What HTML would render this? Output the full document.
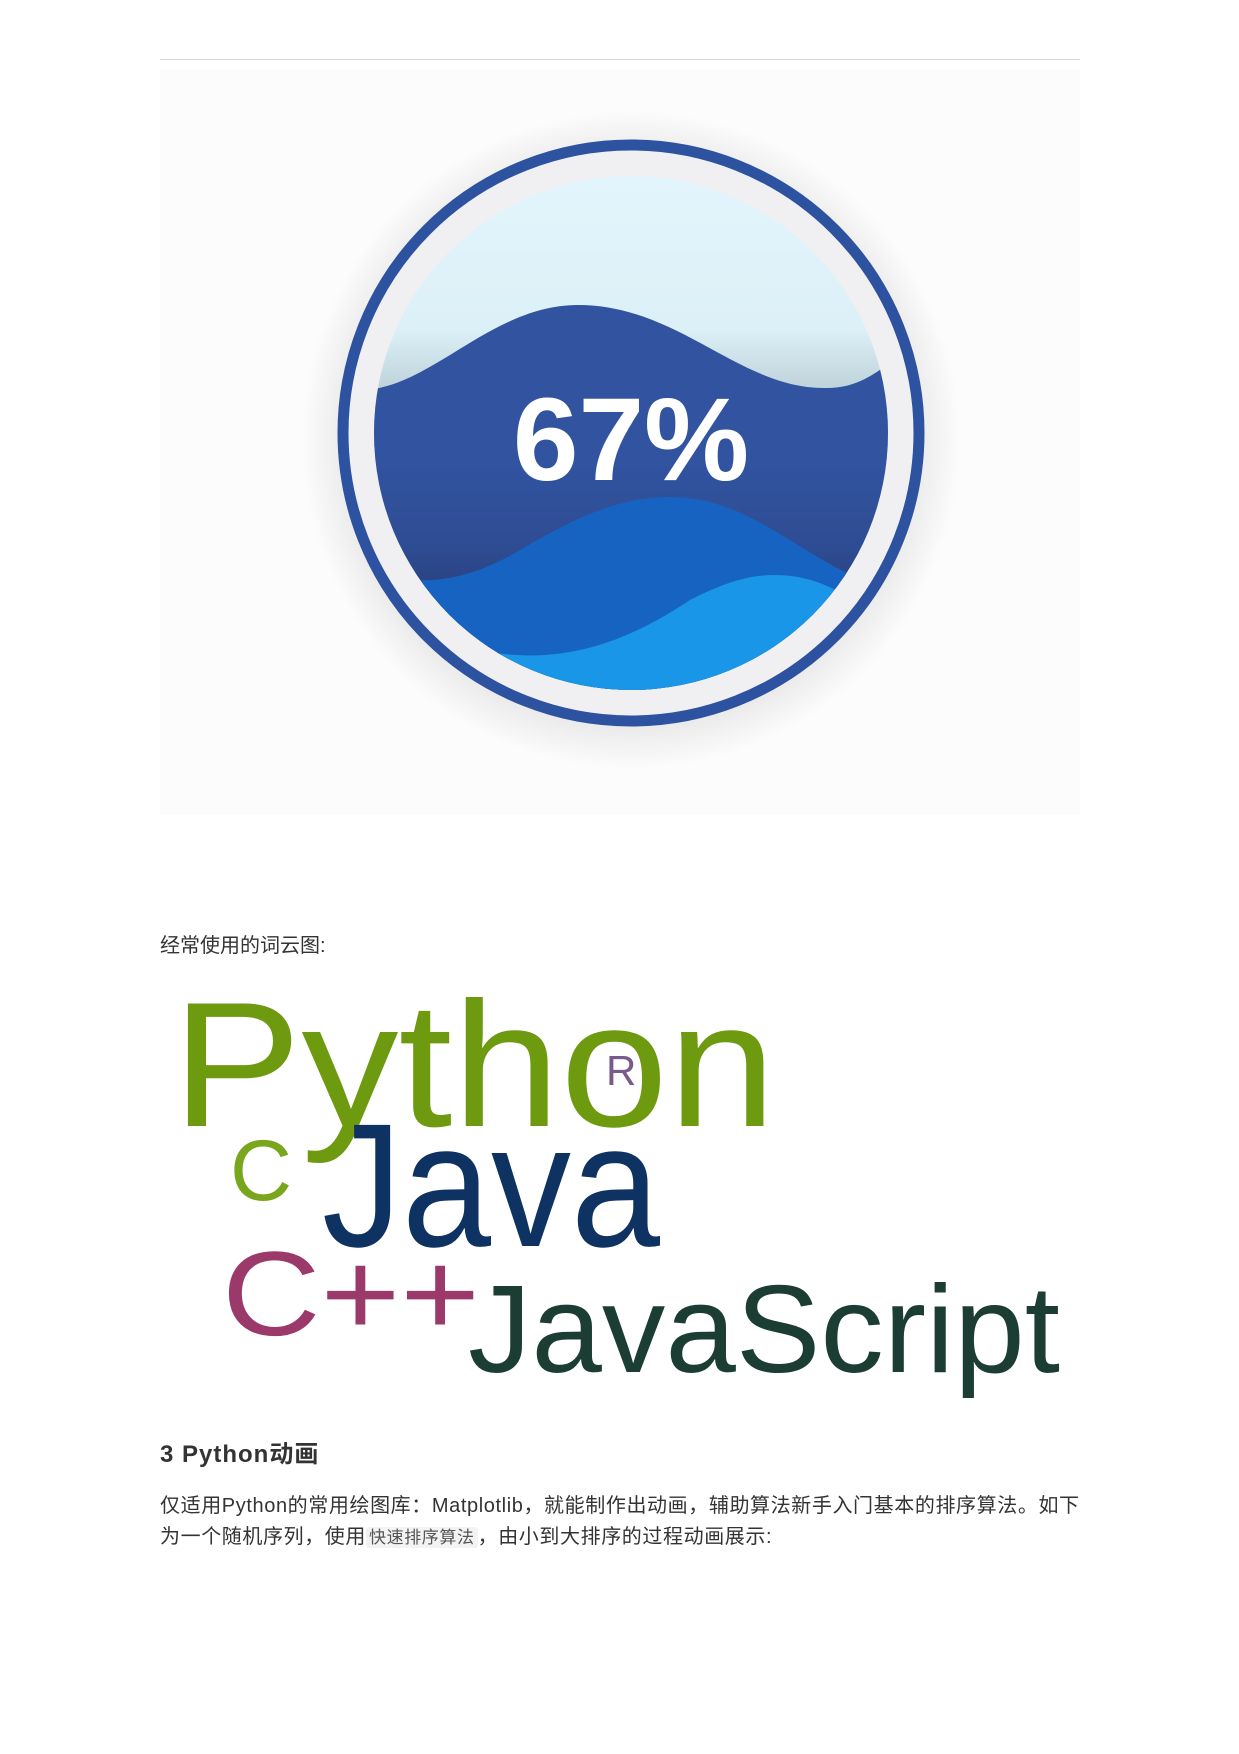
<!DOCTYPE html>
<html><head><meta charset="utf-8"><style>
body{margin:0;background:#fff;width:1239px;height:1754px;position:relative;overflow:hidden;font-family:"Liberation Sans","Noto Sans CJK SC",sans-serif;color:#333}
.hr{position:absolute;left:160px;top:59px;width:920px;height:1px;background:#d8d8d8}
.imgbg{position:absolute;left:160px;top:70px;width:920px;height:745px;background:#fcfcfc}
.t{position:absolute;left:160px;font-size:20px;color:#333;white-space:nowrap}
code{background:#f3f3f3;border-radius:3px;font-size:17px;color:#555;padding:1px 3px;font-family:"Liberation Sans","Noto Sans CJK SC",sans-serif}
</style></head><body>
<div class="hr"></div>
<div class="imgbg"></div>
<svg style="position:absolute;left:0;top:0" width="1239" height="900" viewBox="0 0 1239 900">
<defs>
<radialGradient id="sh" cx="0.5" cy="0.5" r="0.5"><stop offset="0.85" stop-color="#000" stop-opacity="0.08"/><stop offset="1" stop-color="#000" stop-opacity="0"/></radialGradient>
<linearGradient id="sky" x1="0" y1="0" x2="0" y2="1"><stop offset="0" stop-color="#e3f5fc"/><stop offset="0.3" stop-color="#dcf0f7"/><stop offset="0.5" stop-color="#a9bcc6"/></linearGradient>
<linearGradient id="dk" x1="0" y1="0" x2="0" y2="1"><stop offset="0.4" stop-color="#3153a0"/><stop offset="0.62" stop-color="#2e4c92"/><stop offset="0.8" stop-color="#263a72"/></linearGradient>
<clipPath id="c"><circle cx="631" cy="433" r="257"/></clipPath>
</defs>
<circle cx="631" cy="440" r="330" fill="url(#sh)"/>
<circle cx="631" cy="433" r="288" fill="#f0f0f2" stroke="#2d52a0" stroke-width="11"/>
<g clip-path="url(#c)">
<rect x="370" y="170" width="530" height="530" fill="url(#sky)"/>
<path d="M360 390 C430 390 490 305 578 305 C680 305 740 390 827 388 C860 388 880 370 900 355 L900 700 L360 700Z" fill="url(#dk)"/>
<path d="M360 570 C420 590 470 580 520 550 C580 515 620 497 672 497 C740 497 790 545 845 572 L900 590 L900 700 L360 700Z" fill="#1663c2"/>
<path d="M470 648 C560 670 630 640 690 600 C720 585 745 575 775 575 C830 575 870 610 900 640 L900 700 L470 700Z" fill="#1a96e8"/>
</g>
<text x="631" y="480" text-anchor="middle" font-family="Liberation Sans, sans-serif" font-weight="bold" font-size="118" fill="#fff">67%</text>
</svg>
<div class="t" style="top:929px">经常使用的词云图:</div>
<svg style="position:absolute;left:0;top:960px" width="1239" height="460" viewBox="0 960 1239 460">
<g font-family="Liberation Sans, sans-serif">
<text x="172" y="1126" font-size="178" fill="#6e9a0f" textLength="604" lengthAdjust="spacingAndGlyphs">Python</text>
<text x="606" y="1085" font-size="42" fill="#7a5a8a">R</text>
<text x="230" y="1200" font-size="86" fill="#79a61c">C</text>
<text x="322" y="1246" font-size="176" fill="#0e3261" textLength="338" lengthAdjust="spacingAndGlyphs">Java</text>
<text x="222" y="1335" font-size="120" fill="#9b3a6a" textLength="258" lengthAdjust="spacingAndGlyphs">C++</text>
<text x="468" y="1372" font-size="124" fill="#1c3d33" textLength="592" lengthAdjust="spacingAndGlyphs">JavaScript</text>
</g>
</svg>
<div class="t" style="top:1434px;font-size:24px;font-weight:bold;letter-spacing:1px">3 Python动画</div>
<div class="t" style="top:1489px;letter-spacing:0.6px">仅适用Python的常用绘图库：Matplotlib，就能制作出动画，辅助算法新手入门基本的排序算法。如下</div>
<div class="t" style="top:1520px;letter-spacing:0.6px">为一个随机序列，使用<code>快速排序算法</code>，由小到大排序的过程动画展示:</div>
</body></html>
